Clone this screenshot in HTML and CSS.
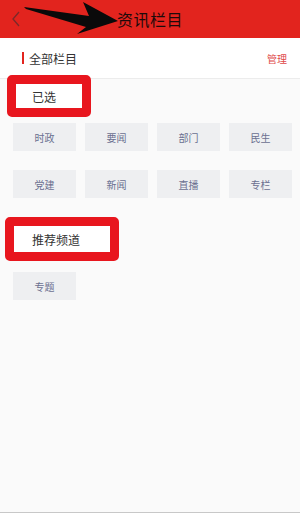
FILE: index.html
```html
<!DOCTYPE html>
<html lang="zh-CN">
<head>
  <meta charset="UTF-8">
  <meta name="viewport" content="width=device-width, initial-scale=1.0">
  <title>资讯栏目</title>
  <link rel="stylesheet" href="styles.css">
</head>
<body>
  <header class="topbar">
    <span class="back">
      <svg width="10" height="16" viewBox="0 0 10 16"><path d="M8 1 L2 8 L8 15" fill="none" stroke="#7a2a2a" stroke-width="1.3"/></svg>
    </span>
    <h1>资讯栏目</h1>
    <!-- seta preta de anotação por cima da barra -->
    <svg class="arrow" width="130" height="38" viewBox="0 0 130 38">
      <polygon points="24,7 26,9 86,27 77,34 118,21 83,2 89,16" fill="#0a0a0a"/>
    </svg>
  </header>

  <div class="all-row">
    <span class="mark"></span>
    <span class="all-title">全部栏目</span>
    <span class="manage">管理</span>
  </div>

  <div class="section-title first">已选</div>
  <div class="chips">
    <div class="chip">时政</div>
    <div class="chip">要闻</div>
    <div class="chip">部门</div>
    <div class="chip">民生</div>
    <div class="chip">党建</div>
    <div class="chip">新闻</div>
    <div class="chip">直播</div>
    <div class="chip">专栏</div>
  </div>

  <div class="section-title second">推荐频道</div>
  <div class="chips">
    <div class="chip">专题</div>
  </div>
</body>
</html>
```

FILE: styles.css
```css
html, body {
  margin: 0;
  padding: 0;
  height: 100%;
  background: #fafafa;
  font-family: "Noto Sans CJK SC", "Noto Sans", sans-serif;
}

body {
  box-sizing: border-box;
  border-bottom: 1px solid #c8c8c8;
}

/* barra vermelha do topo */
.topbar {
  position: relative;
  height: 38px;
  background: #e2241e;
  display: flex;
  align-items: center;
  justify-content: center;
}

.back {
  position: absolute;
  left: 11px;
  top: 11px;
  line-height: 0;
}

.topbar h1 {
  margin: 0;
  font-size: 16px;
  font-weight: normal;
  color: #1e0a0a;
  letter-spacing: 0.5px;
  padding-left: 0;
}

.arrow {
  position: absolute;
  left: 0;
  top: 0;
}

/* linha "全部栏目" */
.all-row {
  height: 40px;
  background: #fff;
  border-bottom: 1px solid #ececec;
  display: flex;
  align-items: center;
  padding: 0 13px 0 22px;
}

.mark {
  width: 2px;
  height: 12px;
  background: #e2241e;
  margin-right: 5px;
}

.all-title {
  font-size: 12px;
  color: #333;
  flex: 1;
}

.manage {
  font-size: 10px;
  color: #e04848;
}

/* caixas vermelhas de anotação */
.section-title {
  box-sizing: border-box;
  border: 9px solid #e8161e;
  border-radius: 5px;
  background: #fff;
  display: flex;
  align-items: center;
  font-size: 12px;
  color: #333;
}

.section-title.first {
  width: 84px;
  height: 42px;
  margin: -4px 0 0 7px;
  padding-left: 16px;
  position: relative;
}

.section-title.second {
  width: 114px;
  height: 44px;
  margin: 19px 0 0 5px;
  padding-left: 18px;
}

.chips {
  display: grid;
  grid-template-columns: repeat(4, 63px);
  column-gap: 9px;
  row-gap: 19px;
  padding-left: 13px;
  margin-top: 6px;
}

.section-title.second + .chips {
  margin-top: 11px;
}

.chip {
  height: 28px;
  background: #eeeff1;
  color: #6b7090;
  font-size: 10px;
  display: flex;
  align-items: center;
  justify-content: center;
}
```
